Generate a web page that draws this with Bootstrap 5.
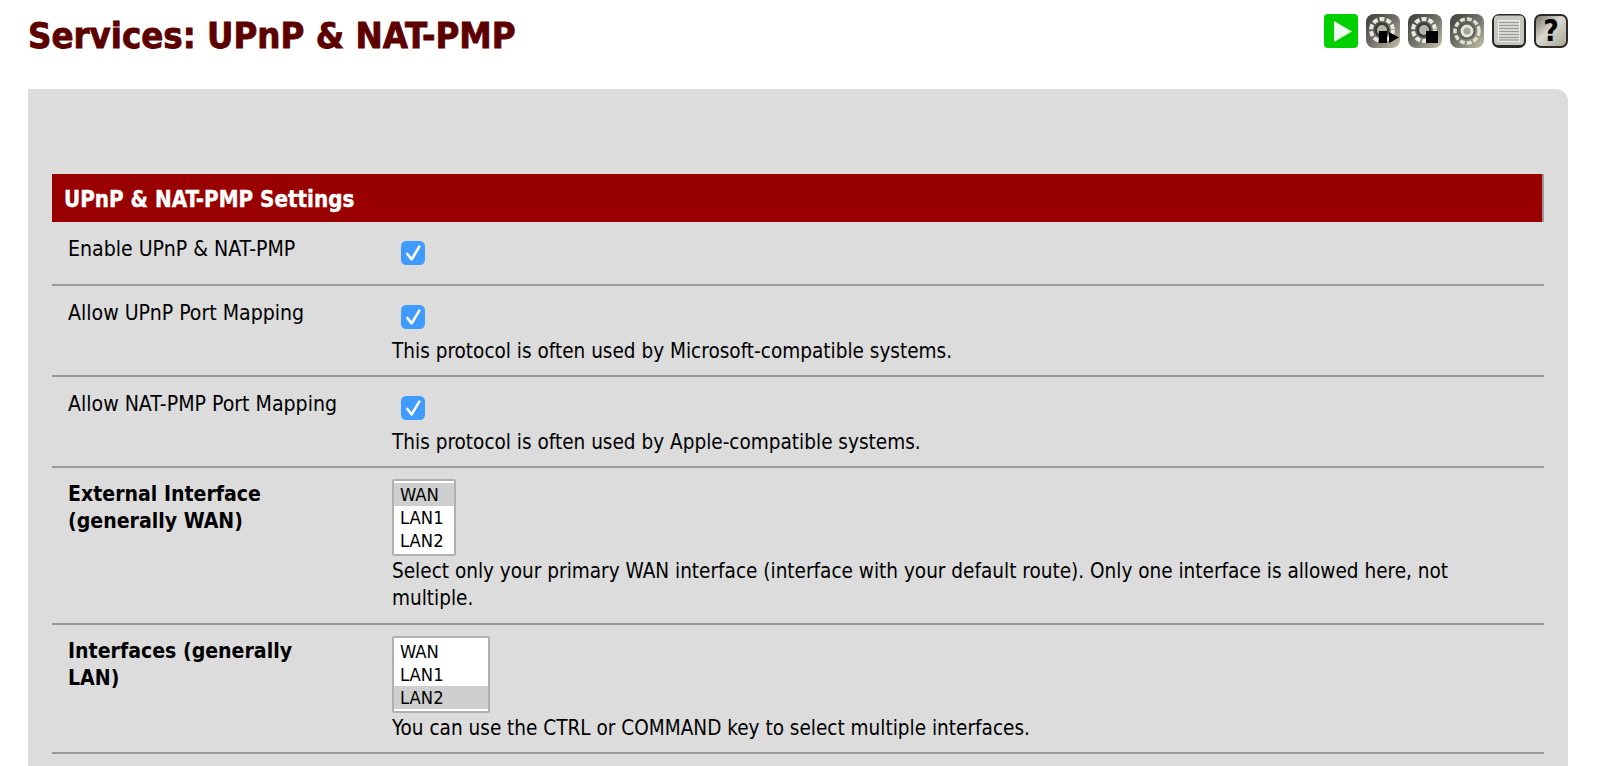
<!DOCTYPE html>
<html lang="en">
<head>
  <meta charset="UTF-8" />
  <meta name="viewport" content="width=device-width, initial-scale=1.0" />
  <title>Services: UPnP &amp; NAT-PMP</title>
  <link href="https://cdn.jsdelivr.net/npm/bootstrap@5.3.0/dist/css/bootstrap.min.css" rel="stylesheet" />
  <style>
    html, body { height: 100%; overflow: hidden; }
    body { font-family: "DejaVu Sans Condensed", "DejaVu Sans", sans-serif; font-stretch: condensed; font-size: 20.55px; line-height: 27.5px; color: #000; background: #fff; padding: 0 34px 0 28px; display: flex; flex-direction: column; }
    .page-head { height: 89px; flex: none; }
    .page-title { font-size: 36.2px; font-weight: 700; color: #5d0000; margin: 14px 0 0; line-height: 44px; -webkit-text-stroke: 0.8px #5d0000; }
    .head-icons { margin-top: 14px; gap: 8px; }
    .head-icons svg { width: 34px; height: 34px; display: block; }
    .panel-box { flex: 1 1 auto; background: #dcdcdc; border-radius: 0 12px 0 0; padding: 85px 24px 0 24px; min-height: 0; }
    .section-head { background: #990000; color: #fff; font-weight: 700; height: 48px; line-height: 50px; padding-left: 12px; font-size: 22.2px; -webkit-text-stroke: 0.4px #fff; border-right: 2px solid #999; }
    .form-line { border-bottom: 2px solid #999; padding: 13px 0 9.5px; }
    .form-line.list-line { padding: 11px 0 12px; }
    .list-line .line-label { margin-top: 1px; }
    .line-label { width: 340px; flex: none; padding-left: 16px; padding-right: 50px; font-size: 21.1px; }
    .line-value { padding-right: 30px; }
    .list-line .line-note { margin-top: 2px; margin-bottom: -2px; }
    .check-box { width: 24px; height: 24px; margin: 6px 0 9px 9px; display: block; border: 0; border-radius: 5px; background-color: #3f9bff; }
    .check-box:checked { background-color: #3f9bff; border: 0; background-size: 24px 24px; background-image: url("data:image/svg+xml,%3csvg xmlns='http://www.w3.org/2000/svg' viewBox='0 0 24 24'%3e%3cpath fill='none' stroke='%23fff' stroke-width='2.6' stroke-linecap='round' stroke-linejoin='round' d='M6.3 13l4.4 5.3L18.3 5.7'/%3e%3c/svg%3e"); }
    .iface-list { display: block; border: 2px solid #b0b0b0; padding: 2px 0; font: inherit; font-size: 18.3px; line-height: 23px; height: 77px; overflow: hidden; outline: 0; background: #fff; }
    .iface-list option { padding: 1px 6px 0; height: 23px; line-height: 22px; min-height: 0; color: #000; }
    .iface-list option:checked { background: linear-gradient(#cfcfcf, #cfcfcf); color: #000; }
    .iface-wan { width: 64px; }
    .iface-lan { width: 98px; }
  </style>
</head>
<body>
  <div class="page-head d-flex justify-content-between align-items-start">
    <h1 class="page-title">Services: UPnP &amp; NAT-PMP</h1>
    <div class="head-icons d-flex">
      <svg viewBox="0 0 34 34"><rect width="34" height="34" rx="4" fill="#00d000"/><path d="M10 7 L28 17.5 L10 28Z" fill="#eefcee"/></svg>
      <svg viewBox="0 0 34 34">
        <defs>
          <linearGradient id="gearbg" x1="0" y1="0" x2="1" y2="1"><stop offset="0" stop-color="#3c3c38"/><stop offset=".55" stop-color="#77776f"/><stop offset="1" stop-color="#c4c4a8"/></linearGradient>
          <linearGradient id="helpbg" x1="0" y1="0" x2="1" y2="1"><stop offset="0" stop-color="#77776e"/><stop offset=".45" stop-color="#d8d8d0"/><stop offset="1" stop-color="#a8a890"/></linearGradient>
          <filter id="soft" x="-5%" y="-5%" width="110%" height="110%"><feGaussianBlur stdDeviation="0.6"/></filter>
        </defs>
        <g filter="url(#soft)"><rect width="34" height="34" rx="8" fill="url(#gearbg)"/><circle cx="16" cy="16" r="11" fill="none" stroke="#e8e8e0" stroke-width="4" stroke-dasharray="5 2"/><circle cx="16" cy="16" r="7.5" fill="#3a3a36"/><circle cx="16" cy="16" r="5" fill="#b4b4ac"/></g>
        <rect x="13" y="17" width="8" height="12" fill="#000"/><path d="M23 18 L33 23.5 L23 29Z" fill="#000"/>
      </svg>
      <svg viewBox="0 0 34 34">
        <g filter="url(#soft)"><rect width="34" height="34" rx="8" fill="url(#gearbg)"/><circle cx="16" cy="16" r="11" fill="none" stroke="#e8e8e0" stroke-width="4" stroke-dasharray="5 2"/><circle cx="16" cy="16" r="7.5" fill="#3a3a36"/><circle cx="16" cy="16" r="5" fill="#b4b4ac"/></g>
        <rect x="18" y="17" width="12" height="12" fill="#000"/>
      </svg>
      <svg viewBox="0 0 34 34">
        <g filter="url(#soft)"><rect width="34" height="34" rx="8" fill="url(#gearbg)"/><circle cx="17" cy="17" r="12" fill="none" stroke="#e0e0d8" stroke-width="3.5" stroke-dasharray="5 2"/><circle cx="17" cy="17" r="8.5" fill="#5c5c56"/><circle cx="17" cy="17" r="6.5" fill="#e4e4dc"/><circle cx="17" cy="17" r="3.5" fill="#a4a49c"/></g>
      </svg>
      <svg viewBox="0 0 34 34">
        <g filter="url(#soft)"><rect width="34" height="34" rx="7" fill="#2c2c28"/><rect x="2" y="1.5" width="30" height="29.5" rx="4" fill="#c6c6c0"/><rect x="6" y="6" width="22" height="22" fill="#ecece6"/></g>
        <path d="M7 8.5H27M7 11.5H27M7 14.5H27M7 17.5H27M7 20.5H27M7 23.5H27M7 26H27" stroke="#9a9a9a" stroke-width="1.3"/>
      </svg>
      <svg viewBox="0 0 34 34">
        <g filter="url(#soft)"><rect width="34" height="34" rx="7" fill="#2c2c28"/><rect x="2" y="2" width="30" height="30" rx="5" fill="url(#helpbg)"/></g>
        <text x="17" y="27" text-anchor="middle" font-family="DejaVu Sans" font-weight="700" font-size="30" fill="#000">?</text>
      </svg>
    </div>
  </div>

  <div class="panel-box">
    <div class="section-head">UPnP &amp; NAT-PMP Settings</div>

    <div class="form-line d-flex">
      <div class="line-label">Enable UPnP &amp; NAT-PMP</div>
      <div class="line-value flex-grow-1"><input class="form-check-input check-box" type="checkbox" checked></div>
    </div>
    <div class="form-line d-flex">
      <div class="line-label">Allow UPnP Port Mapping</div>
      <div class="line-value flex-grow-1">
        <input class="form-check-input check-box" type="checkbox" checked>
        <div class="line-note">This protocol is often used by Microsoft-compatible systems.</div>
      </div>
    </div>
    <div class="form-line d-flex">
      <div class="line-label">Allow NAT-PMP Port Mapping</div>
      <div class="line-value flex-grow-1">
        <input class="form-check-input check-box" type="checkbox" checked>
        <div class="line-note">This protocol is often used by Apple-compatible systems.</div>
      </div>
    </div>
    <div class="form-line list-line d-flex">
      <div class="line-label fw-bold">External Interface (generally WAN)</div>
      <div class="line-value flex-grow-1">
        <select class="iface-list iface-wan" multiple size="3">
          <option selected>WAN</option>
          <option>LAN1</option>
          <option>LAN2</option>
        </select>
        <div class="line-note">Select only your primary WAN interface (interface with your default route). Only one interface is allowed here, not multiple.</div>
      </div>
    </div>
    <div class="form-line list-line d-flex">
      <div class="line-label fw-bold">Interfaces (generally LAN)</div>
      <div class="line-value flex-grow-1">
        <select class="iface-list iface-lan" multiple size="3">
          <option>WAN</option>
          <option>LAN1</option>
          <option selected>LAN2</option>
        </select>
        <div class="line-note">You can use the CTRL or COMMAND key to select multiple interfaces.</div>
      </div>
    </div>
  </div>
  <script src="https://cdn.jsdelivr.net/npm/bootstrap@5.3.0/dist/js/bootstrap.bundle.min.js"></script>
</body>
</html>
